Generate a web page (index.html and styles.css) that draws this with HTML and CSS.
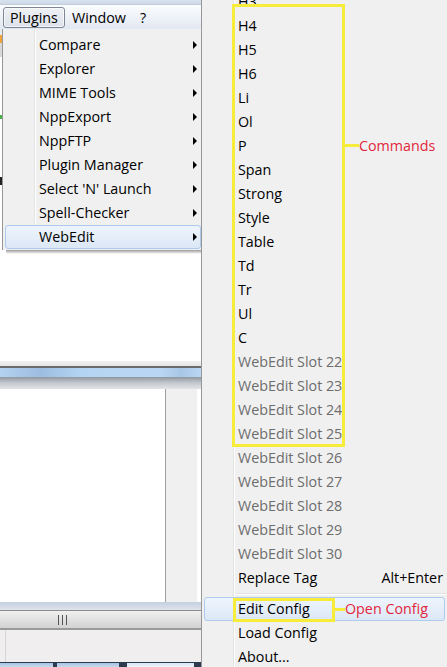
FILE: index.html
```html
<!DOCTYPE html>
<html lang="en">
<head>
    <meta charset="UTF-8">
    <meta name="viewport" content="width=device-width, initial-scale=1.0">
    <title>WebEdit Plugin Menu</title>
    <link rel="stylesheet" href="styles.css">
</head>
<body>
    <div class="screen">
        <div class="npp">
            <div class="titlebar"></div>
            <div class="menubar">
                <span class="menubar-item active">Plugins</span>
                <span class="menubar-item">Window</span>
                <span class="menubar-item">?</span>
            </div>
            <div class="drop-row">
                <div class="edge"></div>
                <ul class="menu dropdown">
                    <li class="menu-item has-sub">Compare</li>
                    <li class="menu-item has-sub">Explorer</li>
                    <li class="menu-item has-sub">MIME Tools</li>
                    <li class="menu-item has-sub">NppExport</li>
                    <li class="menu-item has-sub">NppFTP</li>
                    <li class="menu-item has-sub">Plugin Manager</li>
                    <li class="menu-item has-sub">Select 'N' Launch</li>
                    <li class="menu-item has-sub">Spell-Checker</li>
                    <li class="menu-item has-sub hover">WebEdit</li>
                </ul>
            </div>
            <div class="menu-shadow"></div>
            <div class="editor"></div>
            <div class="dock-top"></div>
            <div class="dock-caption"></div>
            <div class="dock-header"></div>
            <div class="dock-body">
                <div class="dock-list"></div>
                <div class="dock-side"></div>
            </div>
            <div class="hscroll-top"></div>
            <div class="hscroll"><span class="grip"></span></div>
            <div class="statusbar"></div>
            <div class="tabs">
                <span class="tab"></span>
                <span class="tab"></span>
                <span class="tab light"></span>
            </div>
        </div>

        <div class="submenu">
            <ul class="menu sub-list">
                <li class="menu-item">H3</li>
                <li class="menu-item">H4</li>
                <li class="menu-item">H5</li>
                <li class="menu-item">H6</li>
                <li class="menu-item">Li</li>
                <li class="menu-item">Ol</li>
                <li class="menu-item">P</li>
                <li class="menu-item">Span</li>
                <li class="menu-item">Strong</li>
                <li class="menu-item">Style</li>
                <li class="menu-item">Table</li>
                <li class="menu-item">Td</li>
                <li class="menu-item">Tr</li>
                <li class="menu-item">Ul</li>
                <li class="menu-item">C</li>
                <li class="menu-item disabled">WebEdit Slot 22</li>
                <li class="menu-item disabled">WebEdit Slot 23</li>
                <li class="menu-item disabled">WebEdit Slot 24</li>
                <li class="menu-item disabled">WebEdit Slot 25</li>
                <li class="menu-item disabled">WebEdit Slot 26</li>
                <li class="menu-item disabled">WebEdit Slot 27</li>
                <li class="menu-item disabled">WebEdit Slot 28</li>
                <li class="menu-item disabled">WebEdit Slot 29</li>
                <li class="menu-item disabled">WebEdit Slot 30</li>
                <li class="menu-item">Replace Tag<span class="shortcut">Alt+Enter</span></li>
                <li class="separator"></li>
                <li class="menu-item hover">Edit Config</li>
                <li class="menu-item">Load Config</li>
                <li class="menu-item">About...</li>
            </ul>

            <!-- annotations drawn over the menu -->
            <div class="note-box commands-box"></div>
            <div class="note-line commands-line"></div>
            <div class="note-label commands-label">Commands</div>

            <div class="note-box config-box"></div>
            <div class="note-line config-line"></div>
            <div class="note-label config-label">Open Config</div>
        </div>
    </div>
</body>
</html>
```

FILE: styles.css
```css
* {
    margin: 0;
    padding: 0;
    box-sizing: border-box;
}

body {
    width: 447px;
    height: 667px;
    overflow: hidden;
    background: #f0f0f0;
    font-family: 'Open Sans', 'Noto Sans', sans-serif;
    font-size: 14.3px;
    color: #000;
}

.screen {
    display: flex;
    height: 667px;
}

/* ---------- left: Notepad++ window ---------- */

.npp {
    width: 201px;
    display: flex;
    flex-direction: column;
    background: #fff;
}

.titlebar {
    height: 5px;
    background: linear-gradient(#d7e2f0, #cfd9e6);
    border-bottom: 1px solid #c3ccd8;
}

.menubar {
    height: 24px;
    display: flex;
    align-items: center;
    padding-left: 3px;
    background: linear-gradient(#fbfcfe, #e2e8f1);
}

.menubar-item {
    height: 21px;
    line-height: 19px;
    padding: 0 6px;
    border: 1px solid transparent;
    border-radius: 3px;
}

.menubar-item.active {
    border-color: #7e8796;
    background: linear-gradient(#eef1f5, #dde2ea);
    box-shadow: inset 0 0 0 1px rgba(255, 255, 255, 0.6);
}

.drop-row {
    display: flex;
}

.edge {
    width: 2px;
    background: linear-gradient(#e6e9ee 0, #e6e9ee 6px, #f2a23a 6px, #f2a23a 14px, #d8d8d8 14px, #d8d8d8 28px, #fff 28px, #fff 86px, #46b04a 86px, #46b04a 90px, #fff 90px, #fff 148px, #222 148px, #222 156px, #fff 156px);
}

.menu {
    list-style: none;
    background-color: #f0f0f0;
    background-image: linear-gradient(to right, transparent 31px, #e2e3e3 31px, #e2e3e3 32px, #fff 32px, #fff 33px, transparent 33px);
}

.dropdown {
    flex: 1;
    padding: 4px 0 1px;
    border-left: 1px solid #979797;
}

.menu-item {
    height: 24px;
    line-height: 22px;
    margin: 0 2px;
    padding-left: 33px;
    border: 1px solid transparent;
    border-radius: 3px;
    display: flex;
    align-items: center;
    white-space: nowrap;
}

.dropdown .menu-item {
    margin-right: 0;
    padding-right: 3px;
}

.has-sub::after {
    content: "";
    margin-left: auto;
    border-left: 4px solid #000;
    border-top: 4px solid transparent;
    border-bottom: 4px solid transparent;
}

.menu-item.hover {
    border-color: #aecbee;
    background: linear-gradient(#eef4fc, #dce8f6);
}

.menu-item.disabled {
    color: #6d6d6d;
}

.shortcut {
    margin-left: auto;
    padding-right: 1px;
}

.separator {
    height: 7px;
    margin-left: 34px;
    background: linear-gradient(transparent 3px, #e0e0e0 3px, #e0e0e0 4px, #fff 4px, #fff 5px, transparent 5px);
}

.menu-shadow {
    height: 4px;
    background: linear-gradient(#9a9a9a, #fff);
    margin-left: 6px;
}

.editor {
    flex: 1;
    background: #fff;
}

.dock-top {
    height: 7px;
    background: linear-gradient(#f2f2f2 0, #e6e6e6 5px, #6b6b6b 5px);
}

.dock-caption {
    height: 9px;
    background: linear-gradient(to right, #b4d2f1, #9dbde0 20%, #b4d4f3 40%, #bad8f5 80%, #a8c6e6 90%, #bad8f5);
}

.dock-header {
    height: 12px;
    background: linear-gradient(#8f979f, #c4c9cf 50%, #e3e4e6);
}

.dock-body {
    height: 213px;
    display: flex;
}

.dock-list {
    width: 166px;
    background: #fff;
    border-right: 1px solid #a0a0a0;
}

.dock-side {
    flex: 1;
    background: #f0f0f0;
    border-right: 1px solid #fdfdfd;
    margin-right: 3px;
}

.hscroll-top {
    height: 8px;
    background: linear-gradient(#c3d0de, #dfe5ec);
}

.hscroll {
    height: 20px;
    display: flex;
    align-items: center;
    padding-left: 58px;
    border-top: 1px solid #8c8c8c;
    border-bottom: 2px solid #9a9a9a;
    background: linear-gradient(#f0f0f0, #d2d2d2);
}

.grip {
    width: 9px;
    height: 10px;
    background: linear-gradient(to right, #555 0, #555 1px, transparent 1px, transparent 4px, #555 4px, #555 5px, transparent 5px, transparent 8px, #555 8px, #555 9px);
}

.statusbar {
    height: 32px;
    background: #f0eeee;
    border-left: 5px solid #f0eeee;
    box-shadow: inset 6px 0 0 -5px #d6d6d6;
}

.tabs {
    height: 5px;
    display: flex;
    gap: 4px;
    background: #2c3c4e;
    border-top: 1px solid #2c3c4e;
}

.tab {
    width: 53px;
    background: linear-gradient(#a6c3e3, #c7daee);
}

.tab + .tab {
    width: 62px;
}

.tab.light {
    width: 67px;
    margin-left: 4px;
    background: linear-gradient(#d8e6f4, #eef4fb);
}

/* ---------- right: WebEdit submenu ---------- */

.submenu {
    position: relative;
    flex: 1;
    overflow: hidden;
    border-left: 1px solid #979797;
    background: #f0f0f0;
}

.sub-list {
    margin-top: -10px;
}

.note-box {
    position: absolute;
    border: 3px solid #f8ec3b;
}

.commands-box {
    left: 30px;
    top: 4px;
    width: 113px;
    height: 443px;
}

.config-box {
    left: 31px;
    top: 598px;
    width: 102px;
    height: 24px;
}

.note-line {
    position: absolute;
    height: 3px;
    background: #f8ec3b;
}

.commands-line {
    left: 142px;
    top: 144px;
    width: 15px;
}

.config-line {
    left: 132px;
    top: 608px;
    width: 11px;
}

.note-label {
    position: absolute;
    color: #e3263c;
    font-size: 14.3px;
    line-height: 20px;
}

.commands-label {
    left: 157px;
    top: 136px;
}

.config-label {
    left: 143px;
    top: 599px;
}
```
